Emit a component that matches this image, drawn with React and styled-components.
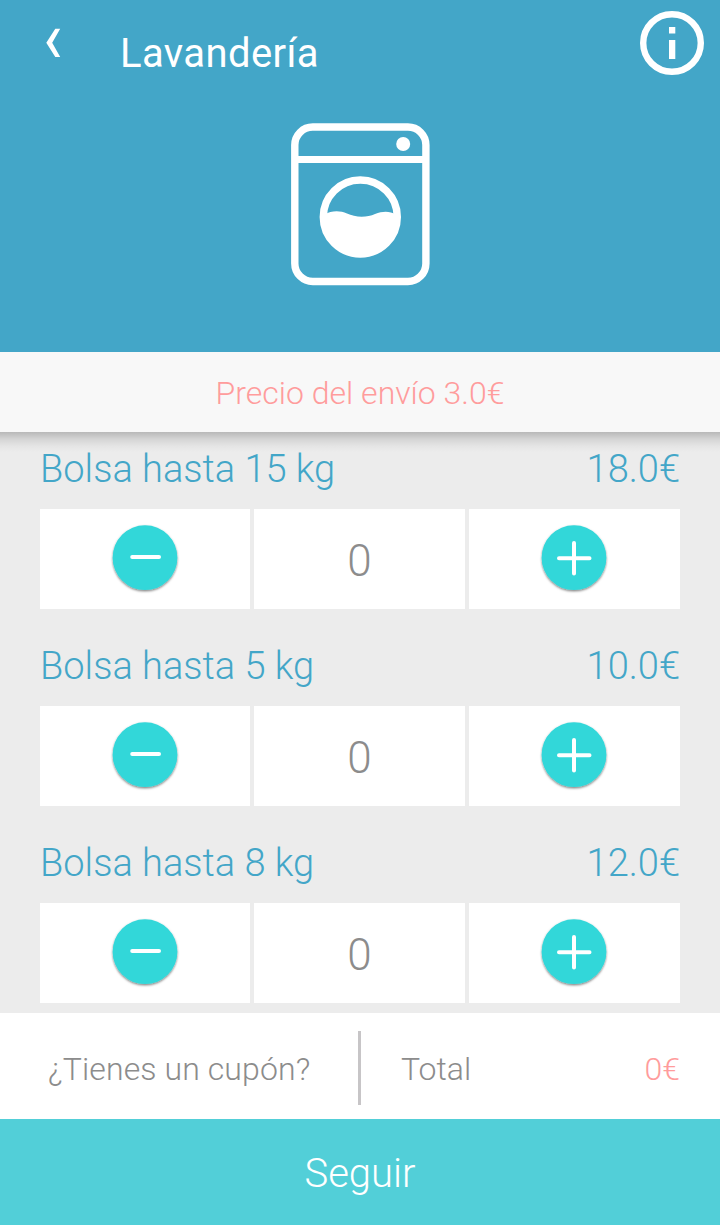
import React, { useState } from "react";
import styled, { createGlobalStyle } from "styled-components";

const GlobalStyle = createGlobalStyle`
  *, *::before, *::after { box-sizing: border-box; }
  body { margin: 0; background: #ececec; }
  button { border: 0; padding: 0; margin: 0; background: none; font: inherit; color: inherit; cursor: pointer; }
  svg { display: block; }
`;

const Screen = styled.div`
  display: flex;
  flex-direction: column;
  width: 720px;
  height: 1225px;
  overflow: hidden;
  background: #ececec;
  font-family: Roboto, "Liberation Sans", sans-serif;
  font-weight: 300;
`;

const Hero = styled.header`
  display: flex;
  flex-direction: column;
  flex: 0 0 352px;
  background: #43a6c8;
  color: #fff;
`;

const TopBar = styled.div`
  display: flex;
  align-items: flex-start;
  height: 122px;
  padding: 11px 16px 0 45px;
`;

const BackButton = styled.button`
  margin-top: 17px;
`;

const Title = styled.h1`
  flex: 1;
  margin: 19px 0 0 59px;
  font-size: 40px;
  line-height: 48px;
  font-weight: 400;
  letter-spacing: 0.4px;
`;

const HeroArt = styled.div`
  display: flex;
  justify-content: center;
`;

const Shipping = styled.div`
  position: relative;
  flex: 0 0 80px;
  padding-top: 2px;
  background: #f8f8f8;
  color: #ff9c9c;
  font-size: 32px;
  line-height: 78px;
  text-align: center;

  &::after {
    content: "";
    position: absolute;
    top: 100%;
    left: 0;
    right: 0;
    height: 20px;
    background: linear-gradient(rgba(0, 0, 0, 0.22), rgba(0, 0, 0, 0.1) 35%, rgba(0, 0, 0, 0.03) 70%, transparent);
  }
`;

const ProductList = styled.main`
  display: flex;
  flex-direction: column;
  gap: 20px;
  flex: 1;
  padding: 0 40px;
`;

const ProductHeading = styled.div`
  display: flex;
  justify-content: space-between;
  height: 77px;
  color: #43a6c8;
  font-size: 38px;
  line-height: 74px;
`;

const Stepper = styled.div`
  display: grid;
  grid-template-columns: 210px 211px 211px;
  grid-template-rows: 100px;
  column-gap: 4px;
`;

const StepButton = styled.button`
  display: flex;
  justify-content: center;
  padding-top: 14px;
  background: #fff;
`;

const Count = styled.div`
  padding-top: 3px;
  background: #fff;
  color: #8c8c8c;
  font-size: 44px;
  line-height: 98px;
  text-align: center;
`;

const Summary = styled.div`
  display: flex;
  flex: 0 0 106px;
  height: 106px;
  background: #fff;
  color: #8c8c8c;
  font-size: 32px;
  line-height: 112px;
`;

const Coupon = styled.div`
  width: 358px;
  padding-left: 48px;
  letter-spacing: 0.1px;
`;

const Divider = styled.div`
  width: 3px;
  height: 74px;
  margin-top: 18px;
  background: #c7c5c7;
`;

const Total = styled.div`
  display: flex;
  flex: 1;
  justify-content: space-between;
  padding: 0 40px;
`;

const TotalAmount = styled.span`
  color: #ff9c9c;
`;

const NextButton = styled.button`
  flex: 0 0 106px;
  padding-top: 3px;
  background: #52cfd8;
  color: #fff;
  font-size: 40px;
  line-height: 103px;
`;

const BackIcon = () => (
  <svg width="16" height="30" viewBox="0 0 16 30" fill="#fff">
    <path d="M10.3 0.7H15.2L7.2 14.7L15.2 28.9H10.3L1.3 14.7Z" />
  </svg>
);

const InfoIcon = () => (
  <svg width="64" height="64" viewBox="0 0 64 64" fill="#fff">
    <circle cx="32" cy="32" r="28.8" fill="none" stroke="#fff" strokeWidth="6.4" />
    <rect x="29" y="16" width="6.3" height="6.5" />
    <rect x="29" y="29" width="6.3" height="19" />
  </svg>
);

const WasherIcon = () => (
  <svg width="140" height="164" viewBox="290 122 140 164" fill="none">
    <rect x="294.8" y="127" width="131.1" height="154.5" rx="18" stroke="#fff" strokeWidth="7.4" />
    <path d="M295 159.5H426" stroke="#fff" strokeWidth="7" />
    <circle cx="403.2" cy="144" r="7" fill="#fff" />
    <circle cx="360.3" cy="217" r="37" stroke="#fff" strokeWidth="7.4" />
    <path
      d="M325 214.500C331 210.500 340 210.300 347 213.500C355 217.500 367 217.700 375 214C383 210.800 390 211 395.600 214.500V217A35.300 36 0 0 1 325 217Z"
      fill="#fff"
    />
  </svg>
);

const RoundIcon = ({ plus }) => (
  <svg width={plus ? 75 : 74} height="74" viewBox={plus ? "0 0 75 74" : "0 0 74 74"}>
    <defs>
      <filter id="lift" x="-20%" y="-20%" width="140%" height="140%">
        <feDropShadow dx="0" dy="1.3" stdDeviation="1.2" floodColor="#000" floodOpacity="0.5" />
      </filter>
    </defs>
    <circle cx="37" cy="34.700" r="32.400" fill="#31d7d9" filter="url(#lift)" />
    {plus ? (
      <path d="M22 35.300H52.500M37 20V50.500" stroke="#fff" strokeWidth="4" strokeLinecap="round" />
    ) : (
      <path d="M24.200 34H51" stroke="#fff" strokeWidth="4" strokeLinecap="round" />
    )}
  </svg>
);

const products = [
  { name: "Bolsa hasta 15 kg", price: 18 },
  { name: "Bolsa hasta 5 kg", price: 10 },
  { name: "Bolsa hasta 8 kg", price: 12 },
];

export default function App() {
  const [counts, setCounts] = useState([0, 0, 0]);
  const change = (index, step) =>
    setCounts((all) => all.map((n, i) => (i === index ? Math.max(0, n + step) : n)));
  const total = counts.reduce((sum, n, i) => sum + n * products[i].price, 0);

  return (
    <Screen>
      <GlobalStyle />
      <Hero>
        <TopBar>
          <BackButton aria-label="Volver"><BackIcon /></BackButton>
          <Title>Lavandería</Title>
          <button aria-label="Información"><InfoIcon /></button>
        </TopBar>
        <HeroArt><WasherIcon /></HeroArt>
      </Hero>
      <Shipping>Precio del envío 3.0€</Shipping>
      <ProductList>
        {products.map((p, i) => (
          <section key={p.name}>
            <ProductHeading>
              <span>{p.name}</span>
              <span>{p.price.toFixed(1)}€</span>
            </ProductHeading>
            <Stepper>
              <StepButton aria-label="Menos" onClick={() => change(i, -1)}><RoundIcon /></StepButton>
              <Count>{counts[i]}</Count>
              <StepButton aria-label="Más" onClick={() => change(i, 1)}><RoundIcon plus /></StepButton>
            </Stepper>
          </section>
        ))}
      </ProductList>
      <Summary>
        <Coupon>¿Tienes un cupón?</Coupon>
        <Divider />
        <Total>
          <span>Total</span>
          <TotalAmount>{total}€</TotalAmount>
        </Total>
      </Summary>
      <NextButton>Seguir</NextButton>
    </Screen>
  );
}
